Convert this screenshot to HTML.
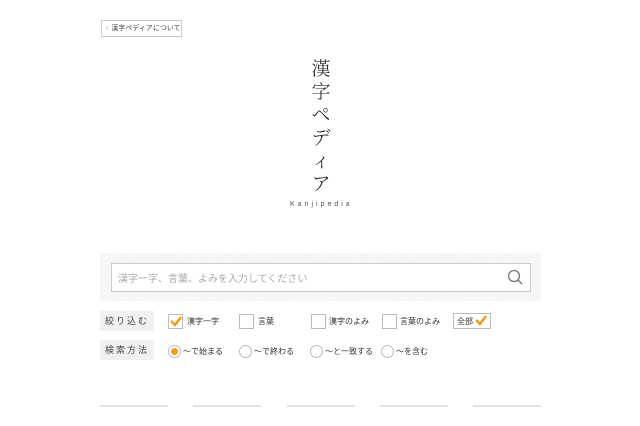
<!DOCTYPE html><html><head><meta charset="utf-8"><style>
body{margin:0;width:640px;height:426px;background:#fff;font-family:"Liberation Sans","Noto Sans CJK JP",sans-serif;position:relative;overflow:hidden;color:#333}
.a{position:absolute;white-space:nowrap}
.btn{left:101px;top:20px;width:79px;height:15px;border:1px solid #ccc;font-size:7px;line-height:15px;color:#444;box-sizing:content-box;overflow:hidden}
.title{left:306px;top:56px;width:30px;font-family:"Noto Serif CJK SC","Noto Sans CJK JP",serif;font-weight:300;font-size:19px;line-height:23px;text-align:center;color:#222;white-space:normal}
.sub{left:290px;top:201px;width:62px;font-size:7px;letter-spacing:3px;color:#555;text-align:center}
.panel{left:100px;top:253px;width:441px;height:48px;background:repeating-linear-gradient(135deg,#f2f2f2 0 1px,#f8f8f8 1px 3px)}
.inp{left:111px;top:263px;width:418px;height:27px;border:1px solid #ccc;background:#fff}
.ph{left:118px;top:270px;font-size:10px;color:#aaa}
.lab{width:54px;height:20px;background:#f1f1f1;font-size:9px;line-height:20px;text-align:center;letter-spacing:2px;color:#444;left:100px}
.cb{width:13px;height:13px;border:1px solid #bbb;background:#fff}
.t{font-size:8px;color:#333}
.r{width:11px;height:11px;border:1px solid #bbb;border-radius:50%}
.ln{top:405px;height:2px;background:#e2e2e2;width:68px}
</style></head><body>
<div class="a btn"><span style="color:#999;margin:0 3px 0 4px">&lsaquo;</span>漢字ペディアについて</div>
<div class="a title">漢<br>字<br>ペ<br>デ<br>ィ<br>ア</div>
<div class="a sub">Kanjipedia</div>
<div class="a panel"></div>
<div class="a inp"></div>
<div class="a ph">漢字一字、言葉、よみを入力してください</div>
<svg class="a" style="left:507px;top:269px" width="16" height="16"><circle cx="7" cy="7" r="5.5" fill="none" stroke="#777" stroke-width="1.3"/><line x1="11" y1="11" x2="15" y2="15" stroke="#777" stroke-width="1.4"/></svg>
<div class="a lab" style="top:311px">絞り込む</div>
<div class="a lab" style="top:340px">検索方法</div>
<div class="a cb" style="left:168px;top:314px"></div>
<svg class="a" style="left:170px;top:316px" width="12" height="11"><path d="M1 5 L5 9 L11 1" fill="none" stroke="#f39c12" stroke-width="2.4"/></svg>
<div class="a t" style="left:187px;top:316px">漢字一字</div>
<div class="a cb" style="left:239px;top:314px"></div>
<div class="a t" style="left:258px;top:316px">言葉</div>
<div class="a cb" style="left:311px;top:314px"></div>
<div class="a t" style="left:329px;top:316px">漢字のよみ</div>
<div class="a cb" style="left:382px;top:314px"></div>
<div class="a t" style="left:400px;top:316px">言葉のよみ</div>
<div class="a" style="left:453px;top:313px;width:36px;height:14px;border:1px solid #bbb"></div>
<div class="a t" style="left:457px;top:316px">全部</div>
<svg class="a" style="left:475px;top:315px" width="12" height="11"><path d="M1 5 L5 9 L11 1" fill="none" stroke="#f39c12" stroke-width="2.4"/></svg>
<div class="a r" style="left:168px;top:345px"></div>
<div class="a" style="left:171px;top:348px;width:7px;height:7px;border-radius:50%;background:#f39c12"></div>
<div class="a t" style="left:183px;top:346px">～で始まる</div>
<div class="a r" style="left:239px;top:345px"></div>
<div class="a t" style="left:254px;top:346px">～で終わる</div>
<div class="a r" style="left:310px;top:345px"></div>
<div class="a t" style="left:325px;top:346px">～と一致する</div>
<div class="a r" style="left:381px;top:345px"></div>
<div class="a t" style="left:396px;top:346px">～を含む</div>
<div class="a ln" style="left:100px"></div>
<div class="a ln" style="left:193px"></div>
<div class="a ln" style="left:287px"></div>
<div class="a ln" style="left:380px"></div>
<div class="a ln" style="left:473px"></div>
</body></html>
